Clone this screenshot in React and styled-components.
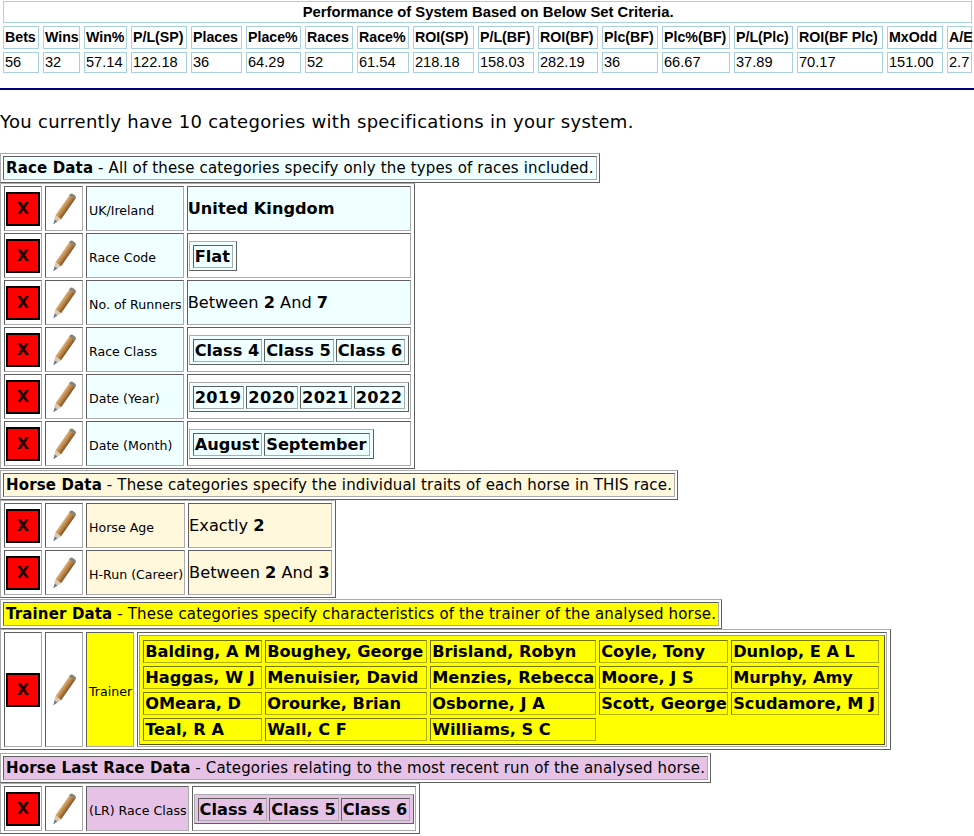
import React from "react";
import styled, { createGlobalStyle } from "styled-components";

const GlobalStyle = createGlobalStyle`
  html, body {
    margin: 0;
    padding: 0;
    background: #fff;
    color: #000;
    overflow-x: hidden;
    font-family: "DejaVu Sans", Verdana, sans-serif;
  }
`;

const themes = {
  race: "#f0ffff",
  horse: "#fff8dc",
  trainer: "#ffff00",
  last: "#e6c3e6",
};

const DARK = "#5f5f5f";
const LIGHT = "#ababab";

const StatsTable = styled.table`
  width: 977px;
  margin: -2px 0 0 -1px;
  table-layout: fixed;
  border-collapse: separate;
  border-spacing: 4px 3px;
  font-family: "Liberation Sans", Arial, sans-serif;
  color: #000;
  td, th {
    border: 1px solid #a9d0de;
    padding: 2px 0 2px 1px;
    text-align: left;
    white-space: nowrap;
  }
  th {
    font-size: 14.2px;
    line-height: 17px;
    font-weight: bold;
  }
  td {
    font-size: 14.6px;
    line-height: 15px;
  }
`;

const StatsTitle = styled.th`
  && {
    text-align: center;
    font-size: 14.8px;
    line-height: 16px;
  }
`;

const Rule = styled.hr`
  height: 2px;
  margin: 12px 0 0;
  border: 0;
  background: #000080;
`;

const Intro = styled.p`
  margin: 21px 0 20px;
  font-size: 18px;
  letter-spacing: 0.3px;
  line-height: 22px;
  white-space: nowrap;
`;

const SectionBar = styled.div`
  display: table;
  border: 1px solid;
  border-color: ${LIGHT} ${DARK} ${DARK} ${LIGHT};
  padding: 2px;
  box-sizing: border-box;
`;

const SectionText = styled.div`
  border: 1px solid;
  border-color: ${DARK} ${LIGHT} ${LIGHT} ${DARK};
  background: ${(p) => themes[p.$theme]};
  padding: 3px 2px 2px;
  font-size: 15px;
  letter-spacing: 0.15px;
  line-height: 17px;
  white-space: nowrap;
`;

const CriteriaTable = styled.table`
  margin-bottom: ${(p) => p.$gap || 1}px;
  border-collapse: separate;
  border-spacing: 3px 2px;
  border: 1px solid;
  border-color: ${LIGHT} ${DARK} ${DARK} ${LIGHT};
  & > tbody > tr > td {
    border: 1px solid;
    border-color: ${DARK} ${LIGHT} ${LIGHT} ${DARK};
    padding: 1px;
  }
`;

const ActionCell = styled.td`
  width: 34px;
  height: ${(p) => p.$height || 41}px;
  text-align: center;
  vertical-align: middle;
  background: #fff;
`;

const DeleteButton = styled.div`
  width: 30px;
  height: 30px;
  margin: 0 auto;
  border: 2px solid #000;
  background: #ff0000;
  display: flex;
  align-items: center;
  justify-content: center;
  font-size: 16px;
  font-weight: bold;
  color: #200000;
`;

const PencilIcon = styled.svg`
  display: block;
  margin: 0 auto;
  width: 32px;
  height: 38px;
`;

const LabelCell = styled.td`
  && {
    background: ${(p) => themes[p.$theme]};
    font-size: 12.6px;
    padding: 4px 1px 1px 2px;
    white-space: nowrap;
  }
`;

const ValueCell = styled.td`
  && {
    background: ${(p) => (p.$plain ? "#fff" : themes[p.$theme])};
    font-size: 16.2px;
    padding: 1px 1px 1px 0;
    white-space: nowrap;
  }
`;

const ChipTable = styled.table`
  margin-left: 1px;
  border-collapse: separate;
  border-spacing: 2px;
  border: 1px solid;
  border-color: ${LIGHT} ${DARK} ${DARK} ${LIGHT};
  padding: 1px 1px 0;
  background: ${(p) => themes[p.$theme]};
`;

const TrainerTable = styled.table`
  width: 746px;
  margin-left: 1px;
  table-layout: fixed;
  border-collapse: separate;
  border-spacing: 3px;
  border: 1px solid;
  border-color: #b0b000 #555500 #555500 #b0b000;
  padding: 1px 2px 0 0;
  background: #ffff00;
`;

const Chip = styled.td`
  border: 1px solid;
  border-color: ${(p) => (p.$yellow ? "#777700 #b0b000 #b0b000 #777700" : `${DARK} ${LIGHT} ${LIGHT} ${DARK}`)};
  background: ${(p) => themes[p.$theme]};
  font-weight: bold;
  font-size: 16.2px;
  letter-spacing: ${(p) => (p.$wide ? "0.4px" : "0")};
  line-height: 19px;
  padding: 1px 2px 1px 1px;
  white-space: nowrap;
`;

const columns = [36, 37, 43, 56, 51, 55, 48, 52, 61, 56, 60, 56, 68, 59, 86, 56, 25];
const trainerColumns = [119, 162, 166, 129, 148];

const headers = [
  "Bets", "Wins", "Win%", "P/L(SP)", "Places", "Place%", "Races", "Race%", "ROI(SP)",
  "P/L(BF)", "ROI(BF)", "Plc(BF)", "Plc%(BF)", "P/L(Plc)", "ROI(BF Plc)", "MxOdd", "A/E",
];

const values = [
  "56", "32", "57.14", "122.18", "36", "64.29", "52", "61.54", "218.18",
  "158.03", "282.19", "36", "66.67", "37.89", "70.17", "151.00", "2.7",
];

const trainers = [
  ["Balding, A M", "Boughey, George", "Brisland, Robyn", "Coyle, Tony", "Dunlop, E A L"],
  ["Haggas, W J", "Menuisier, David", "Menzies, Rebecca", "Moore, J S", "Murphy, Amy"],
  ["OMeara, D", "Orourke, Brian", "Osborne, J A", "Scott, George", "Scudamore, M J"],
  ["Teal, R A", "Wall, C F", "Williams, S C"],
];

const Pencil = () => (
  <PencilIcon viewBox="0 0 32 38">
    <defs>
      <linearGradient id="pencilBody" x1="0" y1="0" x2="1" y2="0">
        <stop offset="0" stopColor="#dcb47e" />
        <stop offset="0.5" stopColor="#bb8446" />
        <stop offset="1" stopColor="#7f5226" />
      </linearGradient>
    </defs>
    <g transform="rotate(35 16 19)">
      <path d="M12.5 3.5q0-2 3.5-2t3.5 2v2h-7z" fill="#8b8474" />
      <rect x="12.5" y="5" width="7" height="24" fill="url(#pencilBody)" />
      <path d="M12.5 29h7L16 37.5z" fill="#dcc7aa" />
      <path d="M14.4 33h3.2L16 37.5z" fill="#66789c" />
    </g>
  </PencilIcon>
);

const Chips = ({ items, theme, wide }) => (
  <ChipTable $theme={theme}>
    <tbody>
      <tr>
        {items.map((item) => (
          <Chip key={item} $theme={theme} $wide={wide}>{item}</Chip>
        ))}
      </tr>
    </tbody>
  </ChipTable>
);

const Row = ({ label, theme, plain, height, children }) => (
  <tr>
    <ActionCell $height={height}><DeleteButton>X</DeleteButton></ActionCell>
    <ActionCell $height={height}><Pencil /></ActionCell>
    <LabelCell $theme={theme}>{label}</LabelCell>
    <ValueCell $theme={theme} $plain={plain}>{children}</ValueCell>
  </tr>
);

const Section = ({ theme, title, text }) => (
  <SectionBar>
    <SectionText $theme={theme}>
      <b>{title}</b> - {text}
    </SectionText>
  </SectionBar>
);

export default function App() {
  return (
    <>
      <GlobalStyle />
      <StatsTable>
        <colgroup>
          {columns.map((w, i) => <col key={i} width={w} />)}
        </colgroup>
        <tbody>
          <tr>
            <StatsTitle colSpan={17}>Performance of System Based on Below Set Criteria.</StatsTitle>
          </tr>
          <tr>
            {headers.map((h) => <th key={h}>{h}</th>)}
          </tr>
          <tr>
            {values.map((v, i) => <td key={i}>{v}</td>)}
          </tr>
        </tbody>
      </StatsTable>
      <Rule />
      <Intro>You currently have 10 categories with specifications in your system.</Intro>

      <Section theme="race" title="Race Data" text="All of these categories specify only the types of races included." />
      <CriteriaTable>
        <tbody>
          <Row label="UK/Ireland" theme="race"><b>United Kingdom</b></Row>
          <Row label="Race Code" theme="race" plain><Chips items={["Flat"]} theme="race" /></Row>
          <Row label="No. of Runners" theme="race">Between <b>2</b> And <b>7</b></Row>
          <Row label="Race Class" theme="race" plain><Chips items={["Class 4", "Class 5", "Class 6"]} theme="race" /></Row>
          <Row label="Date (Year)" theme="race" plain><Chips items={["2019", "2020", "2021", "2022"]} theme="race" wide /></Row>
          <Row label="Date (Month)" theme="race" plain><Chips items={["August", "September"]} theme="race" /></Row>
        </tbody>
      </CriteriaTable>

      <Section theme="horse" title="Horse Data" text="These categories specify the individual traits of each horse in THIS race." />
      <CriteriaTable>
        <tbody>
          <Row label="Horse Age" theme="horse">Exactly <b>2</b></Row>
          <Row label="H-Run (Career)" theme="horse">Between <b>2</b> And <b>3</b></Row>
        </tbody>
      </CriteriaTable>

      <Section theme="trainer" title="Trainer Data" text="These categories specify characteristics of the trainer of the analysed horse." />
      <CriteriaTable $gap={3}>
        <tbody>
          <Row label="Trainer" theme="trainer" plain height={111}>
            <TrainerTable>
              <colgroup>
                {trainerColumns.map((w, i) => <col key={i} width={w} />)}
              </colgroup>
              <tbody>
                {trainers.map((row) => (
                  <tr key={row[0]}>
                    {row.map((name) => <Chip key={name} $theme="trainer" $yellow>{name}</Chip>)}
                  </tr>
                ))}
              </tbody>
            </TrainerTable>
          </Row>
        </tbody>
      </CriteriaTable>

      <Section theme="last" title="Horse Last Race Data" text="Categories relating to the most recent run of the analysed horse." />
      <CriteriaTable>
        <tbody>
          <Row label="(LR) Race Class" theme="last" plain><Chips items={["Class 4", "Class 5", "Class 6"]} theme="last" /></Row>
        </tbody>
      </CriteriaTable>
    </>
  );
}
